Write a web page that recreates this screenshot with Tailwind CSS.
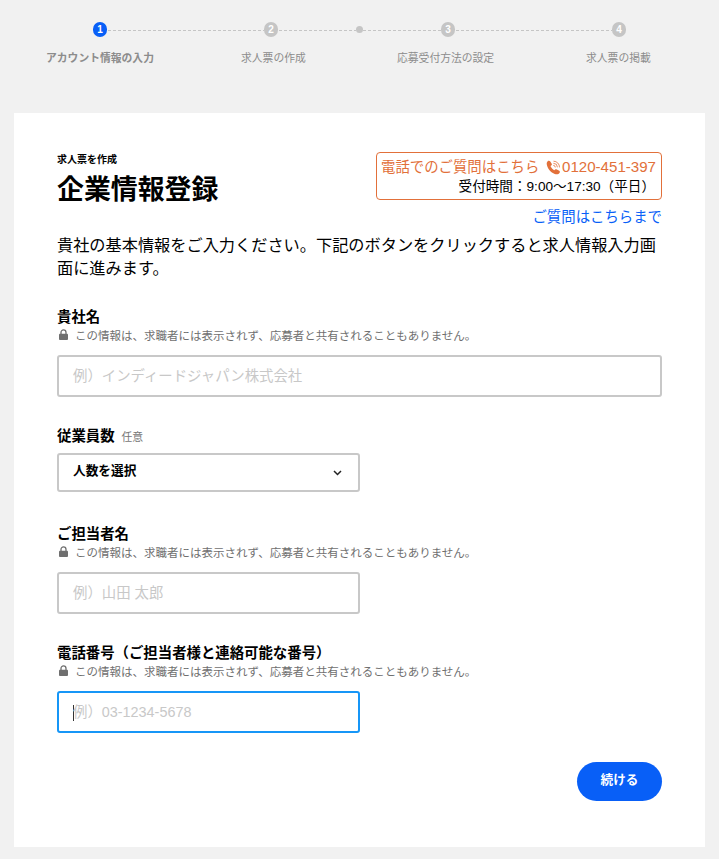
<!DOCTYPE html>
<html lang="ja">
<head>
<meta charset="utf-8">
<title>企業情報登録</title>
<script src="https://cdn.jsdelivr.net/npm/@tailwindcss/browser@4"></script>
</head>
<body class="h-[859px] overflow-hidden bg-[#f1f1f1] font-['Liberation_Sans','Noto_Sans_CJK_JP',sans-serif] text-black">
<svg class="hidden">
  <symbol id="lock" viewBox="0 0 9 12"><path d="M2 5V3.400a2.500 2.500 0 0 1 5 0V5" fill="none" stroke="#6f6f6f" stroke-width="1.300"/><rect y="4.800" width="9" height="6.200" rx=".9" fill="#6f6f6f"/></symbol>
</svg>
<nav class="h-[113px] pt-[22px]">
  <div class="flex items-center pl-[93px] pr-[93px] text-[10px] font-bold leading-[15px] text-white">
    <span class="h-[15px] w-[14px] rounded-full bg-[#085ff7] text-center">1</span>
    <svg class="h-[15px] flex-1"><path d="M1 8.5H157" stroke="#c5c5c5" stroke-dasharray="3 2"/></svg>
    <span class="h-[15px] w-[14px] rounded-full bg-[#c5c5c5] text-center">2</span>
    <svg class="h-[15px] w-[78px]"><path d="M1 8.5H78" stroke="#c5c5c5" stroke-dasharray="3 2"/></svg>
    <span class="h-[7px] w-[7px] rounded-full bg-[#c5c5c5]"></span>
    <svg class="h-[15px] w-[78px]"><path d="M0 8.5H78" stroke="#c5c5c5" stroke-dasharray="3 2"/></svg>
    <span class="h-[15px] w-[14px] rounded-full bg-[#c5c5c5] text-center">3</span>
    <svg class="h-[15px] w-[157px]"><path d="M1 8.5H157" stroke="#c5c5c5" stroke-dasharray="3 2"/></svg>
    <span class="h-[15px] w-[14px] rounded-full bg-[#c5c5c5] text-center">4</span>
  </div>
  <div class="mt-[13px] flex whitespace-nowrap pl-[46px] text-[10.8px] leading-4 text-[#8c8c8c]">
    <span class="w-[195px] font-bold">アカウント情報の入力</span>
    <span class="w-[156px]">求人票の作成</span>
    <span class="w-[189px]">応募受付方法の設定</span>
    <span>求人票の掲載</span>
  </div>
</nav>
<main class="mx-[14px] h-[734px] bg-white px-[43px] pt-[39px]">
  <header class="flex h-[81px] justify-between">
    <div>
      <p class="text-[10px] font-bold leading-[15px]">求人票を作成</p>
      <h1 class="mt-[3px] text-[26.9px] font-bold leading-[40px]">企業情報登録</h1>
    </div>
    <div class="w-[286px]">
      <div class="h-[48px] rounded-[4px] border border-[#e2703a] pl-1 pr-[5px] pt-[4px]">
        <div class="flex items-center justify-between whitespace-nowrap text-[14.4px] leading-5 text-[#e2703a]">
          <span>電話でのご質問はこちら</span>
          <span class="flex items-center text-[15.1px]">
            <svg class="mr-px size-[15px]" viewBox="0 0 15 15" fill="none"><path d="M1.700 1.200C2.600.5 3.700.6 4.300 1.500L5.700 3.700C6.100 4.400 5.900 5 5.300 5.400L4.500 6C5.200 7.900 6.600 9.400 8.400 10.300L9.100 9.600C9.600 9.100 10.200 9 10.800 9.400L13.300 10.800C14 11.300 14.100 12 13.600 12.700 12.600 14.200 10.800 14.600 8.800 13.900 4.800 12.500 1.500 8.600.8 4.500.6 3.100.8 2 1.700 1.200Z" fill="#e2703a"/><path d="M7.500 1.200A6 6 0 0 1 13.500 7.400M7.400 3.300A4 4 0 0 1 11.400 7.300M7.300 5.400A2 2 0 0 1 9.300 7.400" stroke="#e2703a" stroke-width=".8"/></svg>0120-451-397
          </span>
        </div>
        <p class="-ml-1 mr-[1px] whitespace-nowrap text-right text-[13.6px] leading-[19px]">受付時間：9:00～17:30（平日）</p>
      </div>
      <a class="mt-[7px] block text-right text-[14.4px] leading-5 text-[#085ff7]">ご質問はこちらまで</a>
    </div>
  </header>
  <p class="w-[605px] pt-px text-[16.2px] leading-[22.5px]">貴社の基本情報をご入力ください。下記のボタンをクリックすると求人情報入力画面に進みます。</p>
  <form>
    <section class="mt-[28px] h-[119px]">
      <h2 class="text-[14.4px] font-bold leading-5">貴社名</h2>
      <p class="flex h-[16px] items-center whitespace-nowrap text-[11.5px] leading-4 text-[#6f6f6f]"><svg class="ml-[2px] mr-[7px] h-3 w-[9px]"><use href="#lock"/></svg><span class="pt-px">この情報は、求職者には表示されず、応募者と共有されることもありません。</span></p>
      <div class="mt-[12px] flex h-[42px] w-[605px] items-center rounded-[3px] border-2 border-[#c8c8c8] pl-[14px] pt-[2px] text-[14.4px] text-[#c8c8c8]">例）インディードジャパン株式会社</div>
    </section>
    <section class="h-[98px]">
      <h2 class="flex items-center text-[14.4px] font-bold leading-5">従業員数<span class="ml-[7px] pt-[2px] text-[10.8px] font-normal leading-4 text-[#767676]">任意</span></h2>
      <div class="mt-[7px] flex h-[39px] w-[303px] items-center justify-between rounded-[3px] border-2 border-[#c8c8c8] pl-[14px] pr-[16px] text-[12.7px] font-bold"><span class="-mt-px">人数を選択</span><svg class="h-[6px] w-[9px]" viewBox="0 0 9 6"><path d="m1 1 3.500 3.500L8 1" fill="none" stroke="#222" stroke-width="1.500"/></svg></div>
    </section>
    <section class="h-[119px]">
      <h2 class="text-[14.4px] font-bold leading-5">ご担当者名</h2>
      <p class="flex h-[16px] items-center whitespace-nowrap text-[11.5px] leading-4 text-[#6f6f6f]"><svg class="ml-[2px] mr-[7px] h-3 w-[9px]"><use href="#lock"/></svg><span class="pt-px">この情報は、求職者には表示されず、応募者と共有されることもありません。</span></p>
      <div class="mt-[12px] flex h-[42px] w-[303px] items-center rounded-[3px] border-2 border-[#c8c8c8] pl-[14px] pt-[2px] text-[14.4px] text-[#c8c8c8]">例）山田 太郎</div>
    </section>
    <section class="h-[119px]">
      <h2 class="text-[14.4px] font-bold leading-5">電話番号（ご担当者様と連絡可能な番号）</h2>
      <p class="flex h-[16px] items-center whitespace-nowrap text-[11.5px] leading-4 text-[#6f6f6f]"><svg class="ml-[2px] mr-[7px] h-3 w-[9px]"><use href="#lock"/></svg><span class="pt-px">この情報は、求職者には表示されず、応募者と共有されることもありません。</span></p>
      <div class="mt-[12px] flex h-[42px] w-[303px] items-center rounded-[3px] border-2 border-[#1696f7] pl-[14px] pt-[2px] text-[14.4px] text-[#c8c8c8]"><span class="-mr-px mb-px h-[16px] w-px bg-[#333]"></span>例）03-1234-5678</div>
    </section>
    <div class="flex justify-end"><button type="button" class="h-[39px] w-[85px] rounded-full bg-[#085ff7] pb-[2px] text-[12.6px] font-bold text-white">続ける</button></div>
  </form>
</main>
</body>
</html>
